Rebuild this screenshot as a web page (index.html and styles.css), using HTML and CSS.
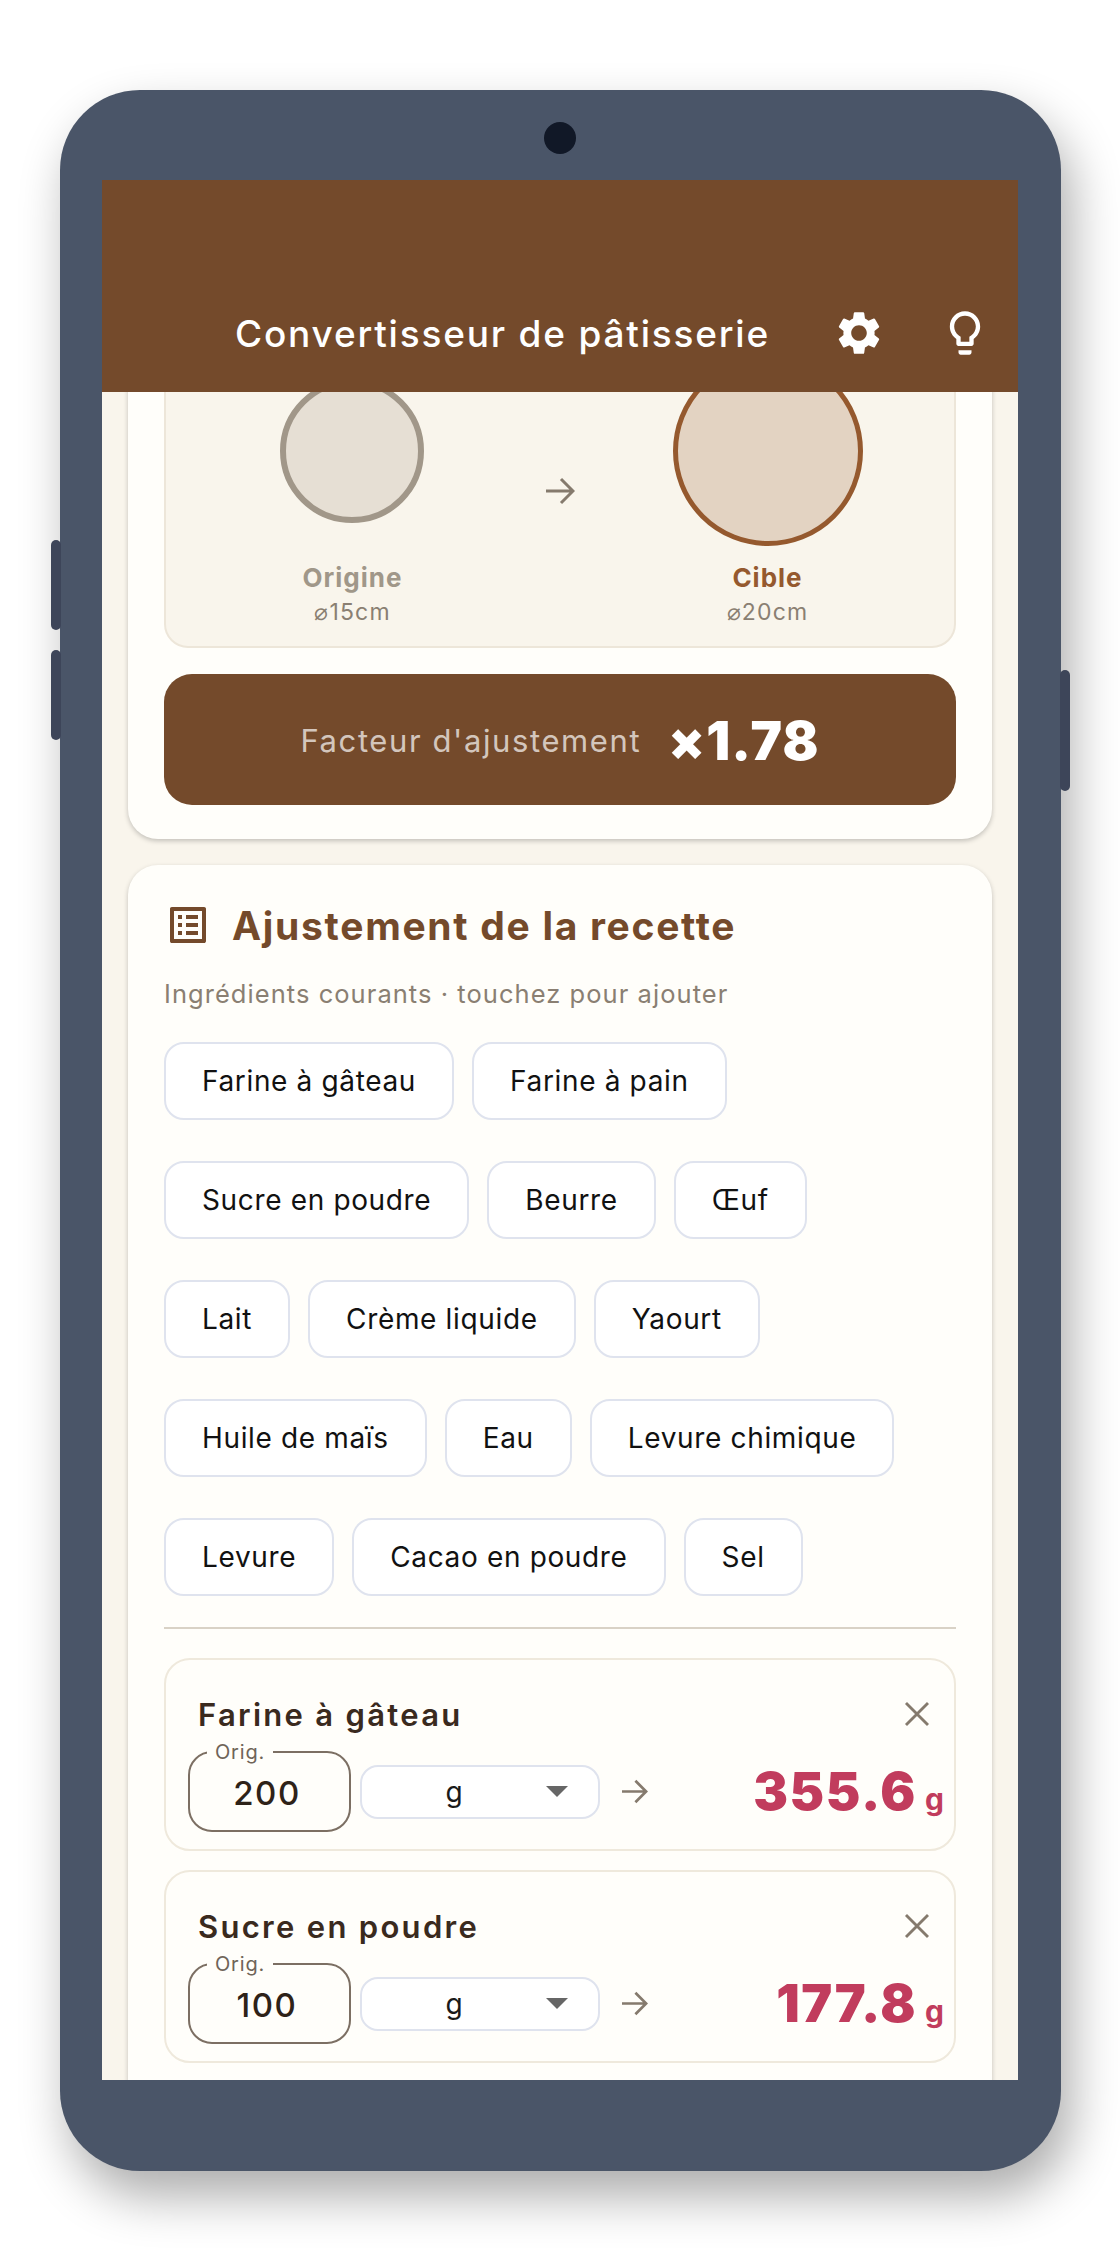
FILE: index.html
```html
<!DOCTYPE html>
<html lang="fr">

<head>
    <meta charset="UTF-8">
    <meta name="viewport" content="width=device-width, initial-scale=1.0">
    <title>Convertisseur de pâtisserie</title>
    <link rel="stylesheet" href="styles.css">
</head>

<body>
    <div class="phone">
        <div class="side-btn vol-up"></div>
        <div class="side-btn vol-down"></div>
        <div class="side-btn power"></div>
        <div class="camera"></div>

        <div class="screen">
            <header class="app-bar">
                <h1 class="app-title">Convertisseur de pâtisserie</h1>
                <button class="bar-btn">
                    <svg class="bar-icon" viewBox="0 0 24 24"><path d="M19.14 12.94c.04-.3.06-.61.06-.94 0-.32-.02-.64-.07-.94l2.03-1.58c.18-.14.23-.41.12-.61l-1.92-3.32c-.12-.22-.37-.29-.59-.22l-2.39.96c-.5-.38-1.03-.7-1.62-.94l-.36-2.54c-.04-.24-.24-.41-.48-.41h-3.84c-.24 0-.43.17-.47.41l-.36 2.54c-.59.24-1.13.57-1.62.94l-2.39-.96c-.22-.08-.47 0-.59.22L2.74 8.87c-.12.21-.08.47.12.61l2.03 1.58c-.05.3-.09.63-.09.94s.02.64.07.94l-2.03 1.58c-.18.14-.23.41-.12.61l1.92 3.32c.12.22.37.29.59.22l2.39-.96c.5.38 1.03.7 1.62.94l.36 2.54c.05.24.24.41.48.41h3.84c.24 0 .44-.17.47-.41l.36-2.54c.59-.24 1.13-.56 1.62-.94l2.39.96c.22.08.47 0 .59-.22l1.92-3.32c.12-.22.07-.47-.12-.61l-2.01-1.58zM12 15.6c-1.98 0-3.6-1.62-3.6-3.6s1.62-3.6 3.6-3.6 3.6 1.62 3.6 3.6-1.62 3.6-3.6 3.6z"/></svg>
                </button>
                <button class="bar-btn">
                    <svg class="bar-icon" viewBox="0 0 24 24"><path d="M9 21c0 .55.45 1 1 1h4c.55 0 1-.45 1-1v-1H9v1zm3-19C8.14 2 5 5.14 5 9c0 2.38 1.19 4.47 3 5.74V17c0 .55.45 1 1 1h6c.55 0 1-.45 1-1v-2.26c1.81-1.27 3-3.36 3-5.74 0-3.86-3.14-7-7-7zm2.85 11.1l-.85.6V16h-4v-2.3l-.85-.6C7.8 12.16 7 10.63 7 9c0-2.76 2.24-5 5-5s5 2.24 5 5c0 1.63-.8 3.16-2.15 4.1z"/></svg>
                </button>
            </header>

            <main class="content">
                <section class="card card-scrolled">
                    <div class="preview">
                        <div class="pan">
                            <div class="pan-slot"><div class="circle circle-origin"></div></div>
                            <div class="pan-name name-origin">Origine</div>
                            <div class="pan-size">⌀15cm</div>
                        </div>
                        <svg class="arrow preview-arrow" viewBox="0 0 30 28"><path d="M1 14H28M16 2L28 14L16 26"/></svg>
                        <div class="pan">
                            <div class="pan-slot"><div class="circle circle-target"></div></div>
                            <div class="pan-name name-target">Cible</div>
                            <div class="pan-size">⌀20cm</div>
                        </div>
                    </div>
                    <div class="factor">
                        <span class="factor-label">Facteur d'ajustement</span>
                        <span class="factor-value">×1.78</span>
                    </div>
                </section>

                <section class="card">
                    <div class="card-head">
                        <svg class="head-icon" viewBox="0 0 24 24"><path d="M19 5v14H5V5h14m1.1-2H3.9c-.5 0-.9.4-.9.9v16.2c0 .4.4.9.9.9h16.2c.4 0 .9-.5.9-.9V3.9c0-.5-.5-.9-.9-.9zM11 7h6v2h-6V7zm0 4h6v2h-6v-2zm0 4h6v2h-6zM7 7h2v2H7zm0 4h2v2H7zm0 4h2v2H7z"/></svg>
                        <h2 class="card-title">Ajustement de la recette</h2>
                    </div>
                    <p class="hint">Ingrédients courants · touchez pour ajouter</p>

                    <div class="chips">
                        <div class="chip-row">
                            <button class="chip">Farine à gâteau</button>
                            <button class="chip">Farine à pain</button>
                        </div>
                        <div class="chip-row">
                            <button class="chip">Sucre en poudre</button>
                            <button class="chip">Beurre</button>
                            <button class="chip">Œuf</button>
                        </div>
                        <div class="chip-row">
                            <button class="chip">Lait</button>
                            <button class="chip">Crème liquide</button>
                            <button class="chip">Yaourt</button>
                        </div>
                        <div class="chip-row">
                            <button class="chip">Huile de maïs</button>
                            <button class="chip">Eau</button>
                            <button class="chip">Levure chimique</button>
                        </div>
                        <div class="chip-row">
                            <button class="chip">Levure</button>
                            <button class="chip">Cacao en poudre</button>
                            <button class="chip">Sel</button>
                        </div>
                    </div>

                    <div class="divider"></div>

                    <div class="ingredient">
                        <div class="ingredient-head">
                            <span class="ingredient-name">Farine à gâteau</span>
                            <svg class="close" viewBox="0 0 24 24"><path d="M5.4 5.4L18.6 18.6M18.6 5.4L5.4 18.6"/></svg>
                        </div>
                        <div class="ingredient-row">
                            <div class="amount"><span class="amount-label">Orig.</span>200</div>
                            <div class="unit"><span class="unit-text">g</span><span class="unit-caret"></span></div>
                            <svg class="arrow row-arrow" viewBox="0 0 30 28"><path d="M1 14H28M16 2L28 14L16 26"/></svg>
                            <div class="result">355.6<span class="result-unit">g</span></div>
                        </div>
                    </div>

                    <div class="ingredient">
                        <div class="ingredient-head">
                            <span class="ingredient-name">Sucre en poudre</span>
                            <svg class="close" viewBox="0 0 24 24"><path d="M5.4 5.4L18.6 18.6M18.6 5.4L5.4 18.6"/></svg>
                        </div>
                        <div class="ingredient-row">
                            <div class="amount"><span class="amount-label">Orig.</span>100</div>
                            <div class="unit"><span class="unit-text">g</span><span class="unit-caret"></span></div>
                            <svg class="arrow row-arrow" viewBox="0 0 30 28"><path d="M1 14H28M16 2L28 14L16 26"/></svg>
                            <div class="result">177.8<span class="result-unit">g</span></div>
                        </div>
                    </div>
                </section>
            </main>
        </div>
    </div>
</body>

</html>
```

FILE: styles.css
```css
* {
    margin: 0;
    box-sizing: border-box;
}

body {
    background-color: white;
    font-family: Inter, "Noto Sans", sans-serif;
    height: 2260px;
    overflow: hidden;
}

button {
    all: unset;
    box-sizing: border-box;
}

/* phone frame */
.phone {
    position: relative;
    width: 1001px;
    height: 2081px;
    margin: 90px 59px 0 60px;
    padding: 90px 43px 91px 42px;
    background-color: #4a5568;
    border-radius: 80px;
    box-shadow: 10px 25px 50px rgba(0, 0, 0, 0.33);
}

.side-btn {
    position: absolute;
    width: 10px;
    background-color: #3d4559;
    border-radius: 5px;
}

.vol-up {
    left: -9px;
    top: 450px;
    height: 90px;
}

.vol-down {
    left: -9px;
    top: 560px;
    height: 90px;
}

.power {
    right: -9px;
    top: 580px;
    height: 121px;
}

.camera {
    position: absolute;
    left: 484px;
    top: 32px;
    width: 32px;
    height: 32px;
    border-radius: 50%;
    background-color: #111827;
}

.screen {
    display: flex;
    flex-direction: column;
    height: 100%;
    overflow: hidden;
    background-color: #f9f5ec;
}

/* app bar */
.app-bar {
    display: flex;
    align-items: center;
    flex-shrink: 0;
    height: 212px;
    padding: 94px 0 0 133px;
    background-color: #744a2b;
    color: white;
    position: relative;
    z-index: 1;
}

.app-title {
    flex: 1;
    font-size: 37px;
    font-weight: 500;
    letter-spacing: 1.8px;
}

.bar-btn {
    display: flex;
    justify-content: center;
    width: 106px;
}

.bar-icon {
    width: 52px;
    height: 52px;
    fill: white;
}

/* scrolled content */
.content {
    flex: 1;
    padding: 0 26px;
    display: flex;
    flex-direction: column;
    gap: 26px;
}

.card {
    background-color: #fffefa;
    border-radius: 30px;
    padding: 36px;
    box-shadow: 0 2px 5px rgba(0, 0, 0, 0.22);
}

.card-scrolled {
    margin-top: -96px;
    padding-bottom: 34px;
}

.preview {
    display: grid;
    grid-template-columns: 1fr 42px 1fr;
    align-items: center;
    padding: 22px 0 20px;
    background-color: #f9f5ec;
    border: 2px solid #ede6d9;
    border-radius: 24px;
}

.pan {
    text-align: center;
}

.pan-slot {
    display: flex;
    align-items: center;
    justify-content: center;
    height: 190px;
}

.circle {
    border-radius: 50%;
}

.circle-origin {
    width: 144px;
    height: 144px;
    margin-right: 2px;
    background-color: #e6dfd4;
    border: 6px solid #a19789;
}

.circle-target {
    width: 190px;
    height: 190px;
    background-color: #e3d3c2;
    border: 5px solid #95592e;
}

.pan-name {
    margin-top: 17px;
    font-size: 26px;
    font-weight: 700;
    line-height: 30px;
    letter-spacing: 1px;
}

.name-origin {
    color: #a09789;
}

.name-target {
    color: #95592e;
}

.pan-size {
    margin-top: 5px;
    font-size: 23px;
    line-height: 28px;
    color: #8a7f72;
    letter-spacing: 1.2px;
}

.arrow {
    fill: none;
    stroke: #857a6d;
    stroke-width: 3;
}

.preview-arrow {
    width: 30px;
    height: 28px;
    justify-self: center;
}

.factor {
    display: flex;
    align-items: center;
    justify-content: center;
    gap: 27px;
    height: 131px;
    margin-top: 26px;
    padding-top: 2px;
    background-color: #744a2b;
    border-radius: 28px;
}

.factor-label {
    font-size: 31px;
    color: rgba(255, 255, 255, 0.7);
    letter-spacing: 1.6px;
}

.factor-value {
    font-size: 53px;
    font-weight: 900;
    color: white;
    letter-spacing: 1.2px;
}

/* recipe card */
.card-head {
    display: flex;
    align-items: center;
    gap: 20px;
}

.head-icon {
    width: 48px;
    height: 48px;
    fill: #744a2b;
}

.card-title {
    font-size: 39px;
    font-weight: 700;
    color: #744a2b;
    letter-spacing: 1.7px;
}

.hint {
    margin-top: 29px;
    font-size: 25.5px;
    color: #8a7f72;
    letter-spacing: 1.05px;
}

.chips {
    display: flex;
    flex-direction: column;
    gap: 41px;
    margin-top: 33px;
}

.chip-row {
    display: flex;
    gap: 18px;
}

.chip {
    display: flex;
    align-items: center;
    height: 78px;
    padding: 0 36px;
    background-color: white;
    border: 2px solid #dfe3ee;
    border-radius: 20px;
    font-size: 28px;
    font-weight: 400;
    letter-spacing: 0.65px;
    color: #111;
}

.divider {
    height: 2px;
    margin: 31px 0 29px;
    background-color: #d9d2c6;
}

.ingredient {
    height: 193px;
    margin-bottom: 19px;
    padding: 36px 10px 0 22px;
    border: 2px solid #efe9dc;
    border-radius: 26px;
}

.ingredient-head {
    display: flex;
    align-items: center;
    justify-content: space-between;
    height: 36px;
    padding-left: 10px;
    padding-right: 7px;
}

.ingredient-name {
    font-size: 31px;
    font-weight: 600;
    letter-spacing: 2.3px;
    color: #3a2a1e;
}

.close {
    width: 40px;
    height: 40px;
    fill: none;
    stroke: #857a6d;
    stroke-width: 1.7;
}

.ingredient-row {
    display: flex;
    align-items: center;
    margin-top: 19px;
}

.amount {
    position: relative;
    width: 163px;
    height: 81px;
    padding-right: 5px;
    border: 2px solid #7c6f63;
    border-radius: 24px;
    font-size: 33px;
    font-weight: 500;
    line-height: 80px;
    letter-spacing: 1.5px;
    text-align: center;
    color: #2e2218;
}

.amount-label {
    position: absolute;
    left: 17px;
    top: -13px;
    padding: 0 8px;
    background-color: #fffefa;
    font-size: 20px;
    font-weight: 400;
    line-height: 24px;
    letter-spacing: 0.8px;
    color: #6f6458;
}

.unit {
    display: flex;
    align-items: center;
    width: 240px;
    height: 54px;
    margin-left: 9px;
    padding-right: 30px;
    background-color: white;
    border: 2px solid #dfe3ee;
    border-radius: 18px;
}

.unit-text {
    flex: 1;
    font-size: 28px;
    text-align: center;
    color: #1a1a1a;
}

.unit-caret {
    width: 0;
    height: 0;
    border-left: 11px solid transparent;
    border-right: 11px solid transparent;
    border-top: 11px solid #666;
}

.row-arrow {
    width: 27px;
    height: 25px;
    margin-left: 21px;
}

.result {
    margin-left: auto;
    font-size: 52px;
    font-weight: 900;
    letter-spacing: 1.6px;
    color: #c13c5d;
}

.result-unit {
    margin-left: 8px;
    font-size: 30px;
    font-weight: 700;
    letter-spacing: 0;
}
```
